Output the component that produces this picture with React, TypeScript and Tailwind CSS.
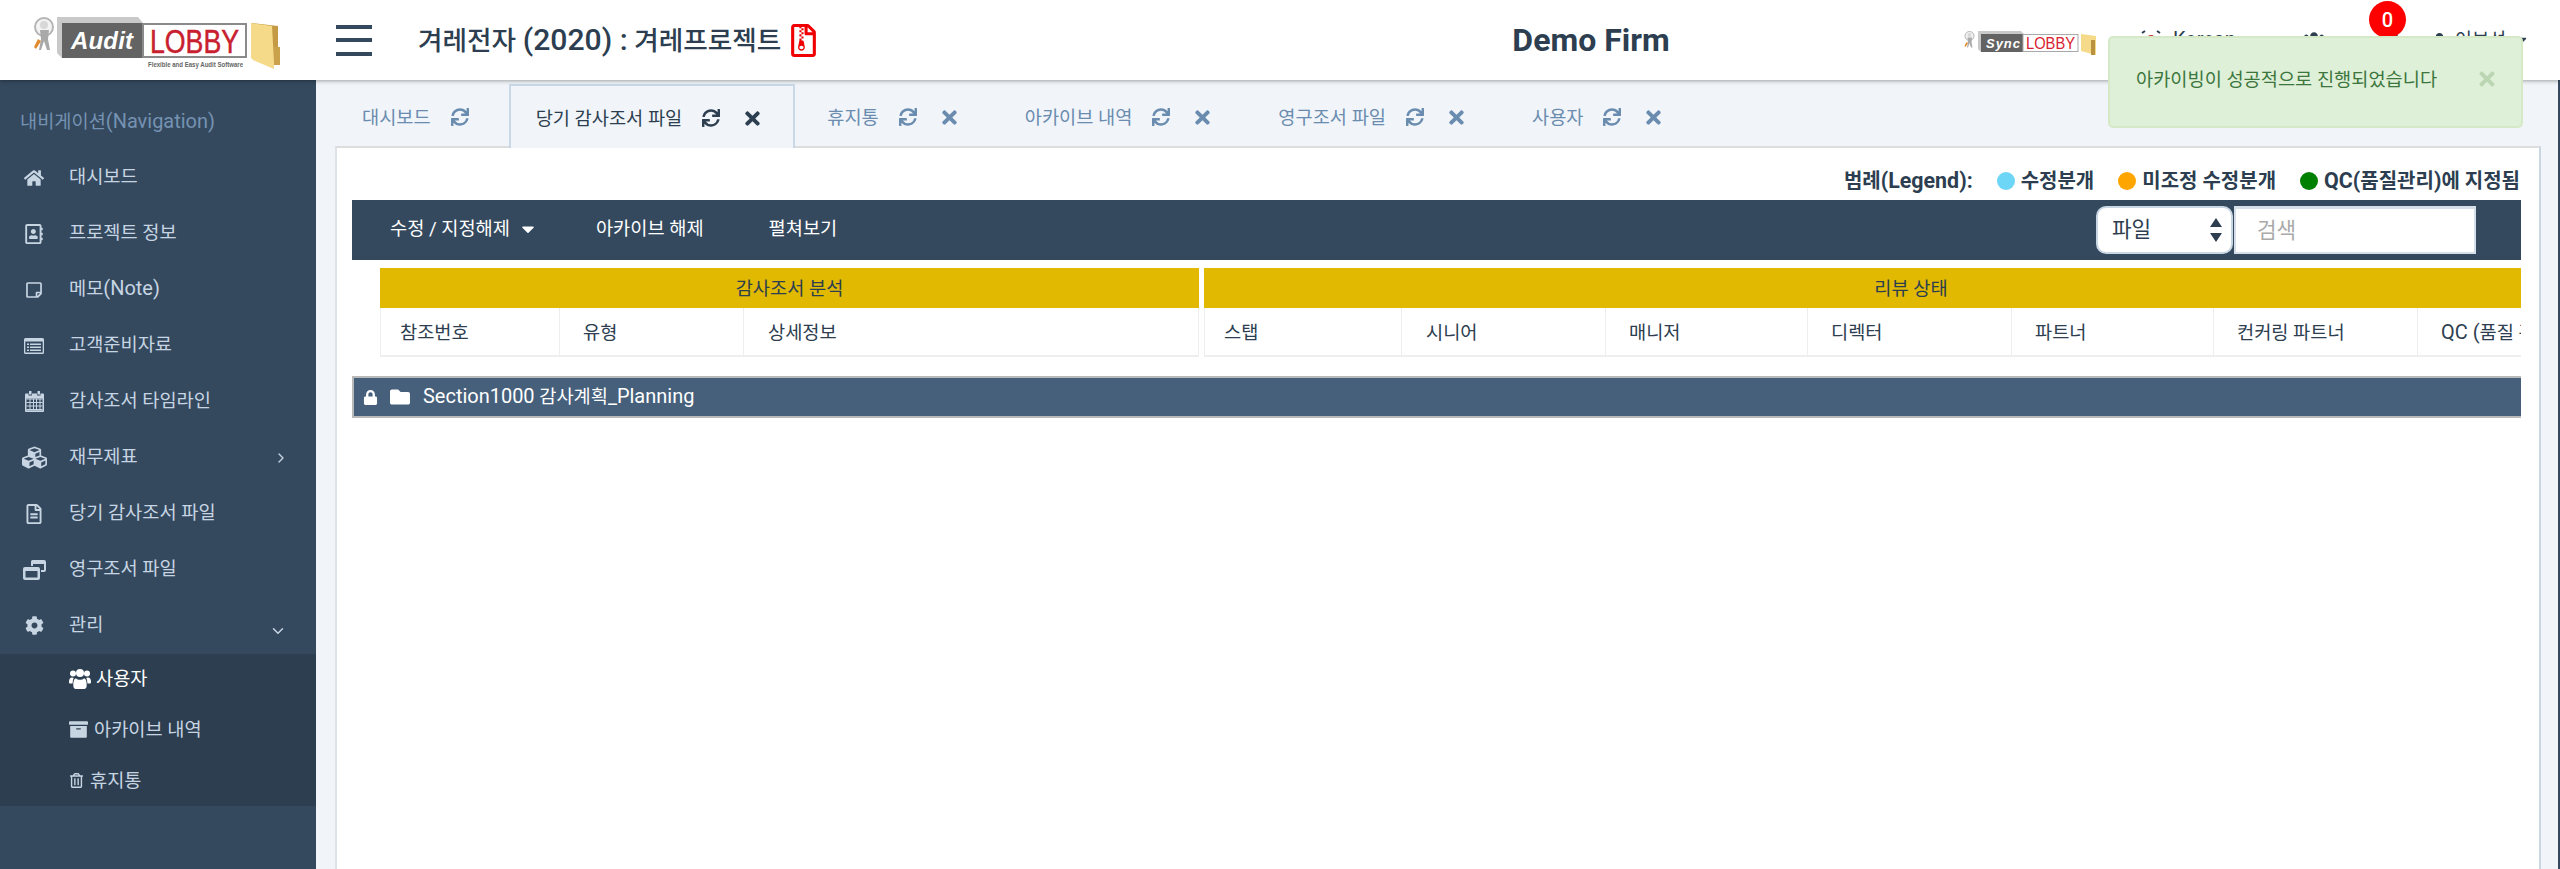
import type { ReactNode } from "react"
import { FaHome, FaRegAddressBook, FaRegStickyNote, FaCubes, FaRegFileAlt, FaCog, FaUsers, FaArchive, FaRegTrashAlt, FaSync, FaTimes, FaLock, FaFolder, FaRegFileArchive, FaUser, FaBell, FaCaretDown } from "react-icons/fa"
import { ChevronRight, ChevronDown } from "lucide-react"

// latin runs sit a bit larger than the hangul around them
function Lat({ children }: { children: ReactNode }) {
  return <span className="text-[1.07em]">{children}</span>
}

function ListAltIcon() {
  return (
    <svg width="20" height="16" viewBox="0 0 20 16" fill="currentColor">
      <path d="M1.5 0h17A1.5 1.5 0 0 1 20 1.500v13a1.500 1.500 0 0 1-1.500 1.500h-17A1.500 1.500 0 0 1 0 14.500v-13A1.500 1.500 0 0 1 1.500 0zM1.300 3.500v11h17.400v-11z" />
      <path d="M3 5.500h2v1.500H3zM6 5.500h11v1.500H6zM3 8.500h2V10H3zM6 8.500h11V10H6zM3 11.500h2V13H3zM6 11.500h11V13H6z" />
    </svg>
  )
}

function CalendarIcon() {
  return (
    <svg width="19" height="21" viewBox="0 0 19 21" fill="currentColor">
      <path d="M4 0h2.500v3.500H4zM12.500 0H15v3.500h-2.500z" />
      <path d="M1 2.500h2.500v2h3.500v-2h5v2h3.500v-2H18a1 1 0 0 1 1 1V20a1 1 0 0 1-1 1H1a1 1 0 0 1-1-1V3.500a1 1 0 0 1 1-1z" />
      <path d="M1.500 7.500h16v12h-16z" fill="#34495e" />
      <path d="M1.500 7.500h16v1h-16zM1.500 11h16v1h-16zM1.500 14.500h16v1h-16zM1.500 18h16v1.500h-16zM4.500 7.500h1v12h-1zM8 7.500h1v12H8zM11 7.500h1v12h-1zM14.500 7.500h1v12h-1z" />
    </svg>
  )
}

function WindowsIcon() {
  return (
    <svg width="23" height="20" viewBox="0 0 23 20" fill="currentColor">
      <path d="M9.500 0H21a2 2 0 0 1 2 2v8a2 2 0 0 1-2 2h-3v-2h3V4H10v2H8V1.500A1.500 1.500 0 0 1 9.500 0z" />
      <path d="M2 7h13a2 2 0 0 1 2 2v9a2 2 0 0 1-2 2H2a2 2 0 0 1-2-2V9a2 2 0 0 1 2-2zm.5 4v6.500h12V11z" />
    </svg>
  )
}

function UsersIcon() {
  return (
    <svg width="22" height="20" viewBox="0 0 22 20" fill="currentColor">
      <circle cx="4" cy="4.500" r="3" />
      <circle cx="18" cy="4.500" r="3" />
      <circle cx="11" cy="4" r="4" />
      <path d="M0 13c0-3 1-4.500 3-4.500 .8 0 1.300 .3 1.800 .7-.7 1-1.100 2.200-1.200 5.300H1c-.7 0-1-.6-1-1.500zM22 13c0-3-1-4.500-3-4.500-.8 0-1.300 .3-1.800 .7 .7 1 1.100 2.200 1.200 5.300H21c.7 0 1-.6 1-1.500z" />
      <path d="M7 9.500c1 .9 2.500 1.200 4 1.200s3-.3 4-1.200c1.800 0 2.700 2.500 2.700 7 0 2-1 3.500-2.500 3.500H6.800c-1.500 0-2.500-1.500-2.500-3.500 0-4.500 .9-7 2.700-7z" />
    </svg>
  )
}

const navItems: { label: ReactNode; icon: ReactNode; arrow?: string }[] = [
  { label: "대시보드", icon: <FaHome size={20} /> },
  { label: "프로젝트 정보", icon: <FaRegAddressBook size={20} /> },
  { label: <>메모<Lat>(Note)</Lat></>, icon: <FaRegStickyNote size={18} /> },
  { label: "고객준비자료", icon: <ListAltIcon /> },
  { label: "감사조서 타임라인", icon: <CalendarIcon /> },
  { label: "재무제표", icon: <FaCubes size={25} />, arrow: "right" },
  { label: "당기 감사조서 파일", icon: <FaRegFileAlt size={20} /> },
  { label: "영구조서 파일", icon: <WindowsIcon /> },
  { label: "관리", icon: <FaCog size={19} />, arrow: "down" },
]

const tabs = [
  { label: "대시보드", close: false, active: false, cls: "pl-[27px] pr-[40px]" },
  { label: "당기 감사조서 파일", close: true, active: true, cls: "pl-[25px] pr-[30px]" },
  { label: "휴지통", close: true, active: false, cls: "ml-[5px] pl-[27px] pr-[32px]" },
  { label: "아카이브 내역", close: true, active: false, cls: "ml-[6px] pl-[27px] pr-[32px]" },
  { label: "영구조서 파일", close: true, active: false, cls: "ml-[6px] pl-[27px] pr-[32px]" },
  { label: "사용자", close: true, active: false, cls: "ml-[6px] pl-[27px] pr-[32px]" },
]

const leftCols = [
  { label: "참조번호", cls: "w-[179px] pl-[19px]" },
  { label: "유형", cls: "w-[184px] pl-[23px]" },
  { label: "상세정보", cls: "flex-1 pl-[24px]" },
]

const reviewCols: { label: ReactNode; cls: string }[] = [
  { label: "스탭", cls: "w-[197px] pl-[19px]" },
  { label: "시니어", cls: "w-[204px] pl-[24px]" },
  { label: "매니저", cls: "w-[202px] pl-[23px]" },
  { label: "디렉터", cls: "w-[204px] pl-[23px]" },
  { label: "파트너", cls: "w-[202px] pl-[23px]" },
  { label: "컨커링 파트너", cls: "w-[204px] pl-[23px]" },
  { label: <><Lat>QC (</Lat>품질 관리<Lat>)</Lat></>, cls: "flex-1 pl-[23px]" },
]

function Figure({ scale = 1 }: { scale?: number }) {
  return (
    <g transform={`scale(${scale})`}>
      <circle cx="11" cy="12" r="9" fill="#f3f3f3" stroke="#b5b5b5" strokeWidth="2" />
      <circle cx="11" cy="10" r="4" fill="#d8d8d8" />
      <path d="M7 15h9l-1 9 2 11h-3l-3-9-3 9H6l2-11z" fill="#a9a9a9" />
      <path d="M5 24l-4 8 2 2 5-8z" fill="#e08a2c" />
    </g>
  )
}

function AuditLogo() {
  return (
    <svg width="250" height="54" viewBox="0 0 250 54">
      <Figure />
      <path d="M24 2h81l5 6H29v35l-5-5z" fill="#c9c9c9" />
      <rect x="29" y="8" width="81" height="35" fill="#636363" />
      <rect x="110" y="9" width="103" height="33" fill="#fff" stroke="#8a8a8a" strokeWidth="2" />
      <text x="38" y="34" fill="#fff" fontFamily="Liberation Sans" fontWeight="700" fontStyle="italic" fontSize="24" textLength="62">Audit</text>
      <text x="117" y="38" fill="#c8202f" stroke="#c8202f" strokeWidth="0.5" fontFamily="Liberation Sans" fontSize="34" textLength="89" lengthAdjust="spacingAndGlyphs">LOBBY</text>
      <text x="115" y="52" fill="#666" fontFamily="Liberation Sans" fontWeight="700" fontSize="6.5" textLength="95" lengthAdjust="spacingAndGlyphs">Flexible and Easy Audit Software</text>
      <path d="M218 8l27 3v38l-27-14z" fill="#c59a45" />
      <path d="M218 8l21 3 2 36v7l-21-9-2-2z" fill="#f5da8a" />
      <path d="M241 32h6v18h-6z" fill="#c9a24b" />
    </svg>
  )
}

function SyncLogo() {
  return (
    <svg width="134" height="27" viewBox="0 0 134 27">
      <Figure scale={0.5} />
      <path d="M14 1h43l3 3H17v18l-3-3z" fill="#c9c9c9" />
      <rect x="17" y="4" width="43" height="18" fill="#636363" />
      <rect x="59" y="4.500" width="55" height="17" fill="#fff" stroke="#a9a9a9" />
      <text x="22" y="18" fill="#fff" fontFamily="Liberation Sans" fontWeight="700" fontStyle="italic" fontSize="13" textLength="34">Sync</text>
      <text x="62" y="19" fill="#d8202f" fontFamily="Liberation Sans" fontSize="17" textLength="49" lengthAdjust="spacingAndGlyphs">LOBBY</text>
      <path d="M117 4l15 2v19l-15-4z" fill="#f5da8a" />
      <path d="M127 10h4v15h-4z" fill="#b8923f" />
    </svg>
  )
}

function Legend({ color, label }: { color: string; label: ReactNode }) {
  return (
    <div className="flex items-center gap-[6px]">
      <span className={`w-[18px] h-[18px] rounded-full ${color}`}></span>
      <span>{label}</span>
    </div>
  )
}

export default function App() {
  return (
    <div className="h-[869px] w-full overflow-hidden flex flex-col relative bg-[#34495e] text-[18.67px] text-[#2c3e50] font-[family-name:Roboto,'Noto_Sans_CJK_KR',sans-serif]">
      <header className="h-20 shrink-0 bg-white flex items-center relative z-10 shadow-[0_1px_4px_rgba(0,0,0,0.35)]">
        <div className="w-[1300px] flex items-center">
          <div className="ml-[33px] mt-[4px]">
            <AuditLogo />
          </div>
          <div className="ml-[53px] w-9 flex flex-col gap-[9.5px]">
            <span className="h-1 bg-[#34495e]"></span>
            <span className="h-1 bg-[#34495e]"></span>
            <span className="h-1 bg-[#34495e]"></span>
          </div>
          <h1 className="ml-[46px] text-[26.67px] font-medium">겨레전자 <span className="text-[1.13em]">(2020) :</span> 겨레프로젝트</h1>
          <FaRegFileArchive size={33} className="ml-[6px] text-[#f00000]" />
        </div>
        <div className="w-[582px] text-center text-[32px] font-bold">Demo Firm</div>
        <div className="flex-1 flex items-center">
          <div className="ml-[82px] mt-[6px]">
            <SyncLogo />
          </div>
          <svg width="20" height="20" viewBox="0 0 20 20" className="ml-[43px]">
            <circle cx="10" cy="10" r="5" fill="#d0342c" />
            <path d="M1 3l3-2M16 1l3 2M1 17l3 2M16 19l3-2" stroke="#2c3e50" strokeWidth="2" />
          </svg>
          <span className="ml-[12px]"><Lat>Korean</Lat></span>
          <FaUsers size={22} className="ml-[67px]" />
          <FaBell size={20} className="ml-[57px]" />
          <FaUser size={15} className="ml-[30px]" />
          <span className="ml-[8px]">이보선</span>
          <FaCaretDown size={18} className="ml-[6px]" />
        </div>
        <span className="absolute left-[2369px] top-[1px] w-[37px] h-[37px] rounded-full bg-[#ff0000] text-white text-[20px] font-medium flex items-center justify-center">0</span>
      </header>

      <div className="flex flex-1 min-h-0">
        <aside className="w-[316px] shrink-0 flex flex-col text-[#c7d5e3]">
          <div className="h-[68px] pl-[20px] pt-[28px] text-[#7592b2] leading-[26px]">내비게이션<Lat>(Navigation)</Lat></div>
          {navItems.map((item, i) => (
            <div key={i} className="h-14 flex items-center relative">
              <span className="w-[69px] shrink-0 flex justify-center pr-[1px] pt-[3px]">{item.icon}</span>
              <span className="pt-[1px]">{item.label}</span>
              {item.arrow === "right" && <ChevronRight size={16} className="absolute left-[273px] top-[22px]" />}
              {item.arrow === "down" && <ChevronDown size={18} className="absolute left-[269px] top-[26px]" />}
            </div>
          ))}
          <div className="mt-[2px] bg-[#2d3e50] pl-[69px]">
            <div className="h-[50px] flex items-center gap-[5px] text-white">
              <UsersIcon />
              <span>사용자</span>
            </div>
            <div className="h-[51px] flex items-center gap-[6px]">
              <FaArchive size={19} />
              <span>아카이브 내역</span>
            </div>
            <div className="h-[51px] flex items-center gap-[6px]">
              <FaRegTrashAlt size={15} />
              <span>휴지통</span>
            </div>
          </div>
        </aside>

        <main className="flex-1 min-w-0 mr-[2px] flex flex-col bg-[#f1f5f9]">
          <div className="h-[66px] shrink-0 pl-[19px] pt-[4px] flex relative z-[1]">
            {tabs.map((tab) => (
              <div
                key={tab.label}
                className={`flex items-center h-[64px] pt-[2px] ${tab.cls} ${tab.active ? "text-[#2c3e50] border-2 border-b-0 border-[#c9d8e6] bg-[#f1f5f9]" : "text-[#6a8caf]"}`}
              >
                <span className="pt-[2px]">{tab.label}</span>
                <FaSync size={18} className="ml-[20px]" />
                {tab.close && <FaTimes size={21} className="ml-[22px]" />}
              </div>
            ))}
          </div>

          <div className="flex-1 min-h-0 ml-[19px] mr-[17px] bg-white border-t-2 border-l-2 border-r-2 border-t-[#dddddd] border-l-[#dde3e9] border-r-[#c9d6e3] pl-[15px] pr-[18px]">
            <div className="h-[52px] flex items-center justify-end font-bold pt-[14px] pr-[1px] text-[20px]">
              <span className="mr-[24px]">범례<Lat>(Legend):</Lat></span>
              <div className="flex items-center gap-[24px]">
                <Legend color="bg-[#6dd5f5]" label="수정분개" />
                <Legend color="bg-[#ffa500]" label="미조정 수정분개" />
                <Legend color="bg-[#008000]" label={<><Lat>QC(</Lat>품질관리<Lat>)</Lat>에 지정됨</>} />
              </div>
            </div>

            <div className="h-[60px] bg-[#34495e] text-white flex items-center">
              <div className="ml-[38px] pb-[2px] flex items-center">
                <span>수정 / 지정해제</span>
                <FaCaretDown size={20} className="ml-[8px]" />
              </div>
              <span className="ml-[58px] pb-[2px]">아카이브 해제</span>
              <span className="ml-[65px] pb-[2px]">펼쳐보기</span>
              <div className="ml-auto mr-[45px] flex items-center gap-[1px] text-[21.33px]">
                <div className="w-[137px] h-12 pl-[14px] pr-[8px] rounded-[10px] bg-white text-[#2c3e50] border-2 border-[#c9d6e3] flex items-center justify-between">
                  <span>파일</span>
                  <svg width="14" height="26" viewBox="0 0 14 26">
                    <path d="M7 1l6 9H1zM7 25l-6-9h12z" fill="#2c3e50" />
                  </svg>
                </div>
                <input
                  placeholder="검색"
                  className="w-[242px] h-12 pl-[21px] bg-white border-2 border-t-[3px] border-[#d5dfe9] outline-none placeholder:text-[#aaaaaa]"
                />
              </div>
            </div>

            <div className="mt-2 overflow-hidden">
              <div className="ml-[28px] flex gap-[5px] w-[2238px]">
                <div className="w-[819px] shrink-0">
                  <div className="h-10 pt-[1px] bg-[#e0b900] flex items-center justify-center">감사조서 분석</div>
                  <div className="flex h-[49px] items-center border-b-2 border-l border-r border-[#eeeeee]">
                    {leftCols.map((col) => (
                      <div key={col.label} className={`h-full pt-[2px] flex items-center border-r border-[#eeeeee] last:border-r-0 ${col.cls}`}>{col.label}</div>
                    ))}
                  </div>
                </div>
                <div className="w-[1414px] shrink-0">
                  <div className="h-10 pt-[1px] bg-[#e0b900] flex items-center justify-center">리뷰 상태</div>
                  <div className="flex h-[49px] items-center border-b-2 border-l border-[#eeeeee]">
                    {reviewCols.map((col, i) => (
                      <div key={i} className={`h-full pt-[2px] flex items-center whitespace-nowrap border-r border-[#eeeeee] ${col.cls}`}>
                        <span>{col.label}</span>
                      </div>
                    ))}
                  </div>
                </div>
              </div>
            </div>

            <div className="mt-[19px] h-[42px] bg-[#46607c] border-y-2 border-l-2 border-[#b9b9b9] text-white flex items-center">
              <FaLock size={15} className="ml-[9px]" />
              <FaFolder size={20} className="ml-[12px]" />
              <span className="ml-[13px]"><Lat>Section1000</Lat> 감사계획<Lat>_Planning</Lat></span>
            </div>
          </div>
        </main>
      </div>

      <div className="absolute z-20 left-[2108px] top-[36px] w-[415px] h-[92px] rounded-[5px] bg-[#dff0d8] border-2 border-[#d6e9c6] text-[#3c763d] flex items-start pt-[29px] pl-[26px]">
        <span className="leading-[26px]">아카이빙이 성공적으로 진행되었습니다</span>
        <FaTimes size={22} className="absolute right-[23px] top-[30px] text-[#bcd6b4]" />
      </div>
    </div>
  )
}
